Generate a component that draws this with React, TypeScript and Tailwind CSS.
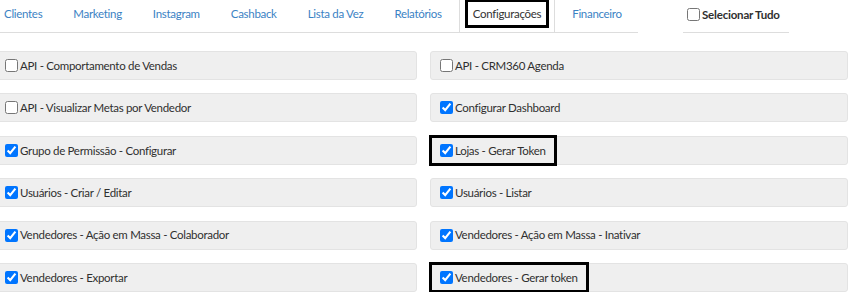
import React from "react";

const TABS = [
  "Clientes",
  "Marketing",
  "Instagram",
  "Cashback",
  "Lista da Vez",
  "Relatórios",
  "Configurações",
  "Financeiro",
];

const PERMISSIONS: { label: string; checked: boolean; focus?: boolean }[] = [
  { label: "API - Comportamento de Vendas", checked: false },
  { label: "API - CRM360 Agenda", checked: false },
  { label: "API - Visualizar Metas por Vendedor", checked: false },
  { label: "Configurar Dashboard", checked: true },
  { label: "Grupo de Permissão - Configurar", checked: true },
  { label: "Lojas - Gerar Token", checked: true, focus: true },
  { label: "Usuários - Criar / Editar", checked: true },
  { label: "Usuários - Listar", checked: true },
  { label: "Vendedores - Ação em Massa - Colaborador", checked: true },
  { label: "Vendedores - Ação em Massa - Inativar", checked: true },
  { label: "Vendedores - Exportar", checked: true },
  { label: "Vendedores - Gerar token", checked: true, focus: true },
];

const Tabs = () => {
  return (
    <ul className="flex shrink-0 h-[33px] w-[648px] ml-[-10px] border-b border-[#dddddd]">
      {TABS.map((tab) => {
        const isActive = tab === "Configurações";
        return (
          <li
            key={tab}
            className={`flex shrink-0 items-start h-[32px] px-[5px] mr-[3px] border-x ${
              isActive ? "border-[#dddddd]" : "border-transparent"
            }`}
          >
            <span
              className={`flex items-center whitespace-nowrap h-[29px] mt-[-1px] px-[8px] text-[11.5px] tracking-[-0.3px] ${
                isActive
                  ? "text-[#333333] outline-[3px] outline-black outline-offset-[-3px]"
                  : "text-[#3b82c4]"
              }`}
            >
              {tab}
            </span>
          </li>
        );
      })}
    </ul>
  );
};

const PermissionRow = ({
  label,
  checked,
  focus,
}: {
  label: string;
  checked: boolean;
  focus?: boolean;
}) => {
  return (
    <div className="flex h-[29px] bg-[#efefef] border border-[#e3e3e3] rounded-[3px]">
      <label
        className={`flex items-center h-full pl-[9px] pr-[9px] text-[11.5px] tracking-[-0.3px] text-[#2f2f2f] whitespace-nowrap ${
          focus ? "outline-[3px] outline-black outline-offset-[-1px]" : ""
        }`}
      >
        <input
          type="checkbox"
          defaultChecked={checked}
          className="m-0 mr-[2px] w-[13px] h-[13px]"
        />
        <span>{label}</span>
      </label>
    </div>
  );
};

export default function App() {
  return (
    <div
      className="w-[852px] h-[292px] overflow-hidden bg-white"
      style={{ fontFamily: "Lato, 'Liberation Sans', sans-serif" }}
    >
      <div className="flex">
        <Tabs />
        <div className="shrink-0 ml-[45px] w-[106px] h-[33px] border-b border-[#dddddd] flex items-center pl-[4px] pb-[3px]">
          <label className="flex items-center whitespace-nowrap text-[11.5px] tracking-[-0.2px] font-bold text-[#2f2f2f]">
            <input
              type="checkbox"
              className="m-0 mr-[2px] w-[13px] h-[13px]"
            />
            <span>Selecionar Tudo</span>
          </label>
        </div>
      </div>

      <div className="grid grid-cols-[422px_418px] gap-x-[13px] gap-y-[13.4px] ml-[-5px] mt-[18px]">
        {PERMISSIONS.map((p) => (
          <PermissionRow
            key={p.label}
            label={p.label}
            checked={p.checked}
            focus={p.focus}
          />
        ))}
      </div>
    </div>
  );
}
